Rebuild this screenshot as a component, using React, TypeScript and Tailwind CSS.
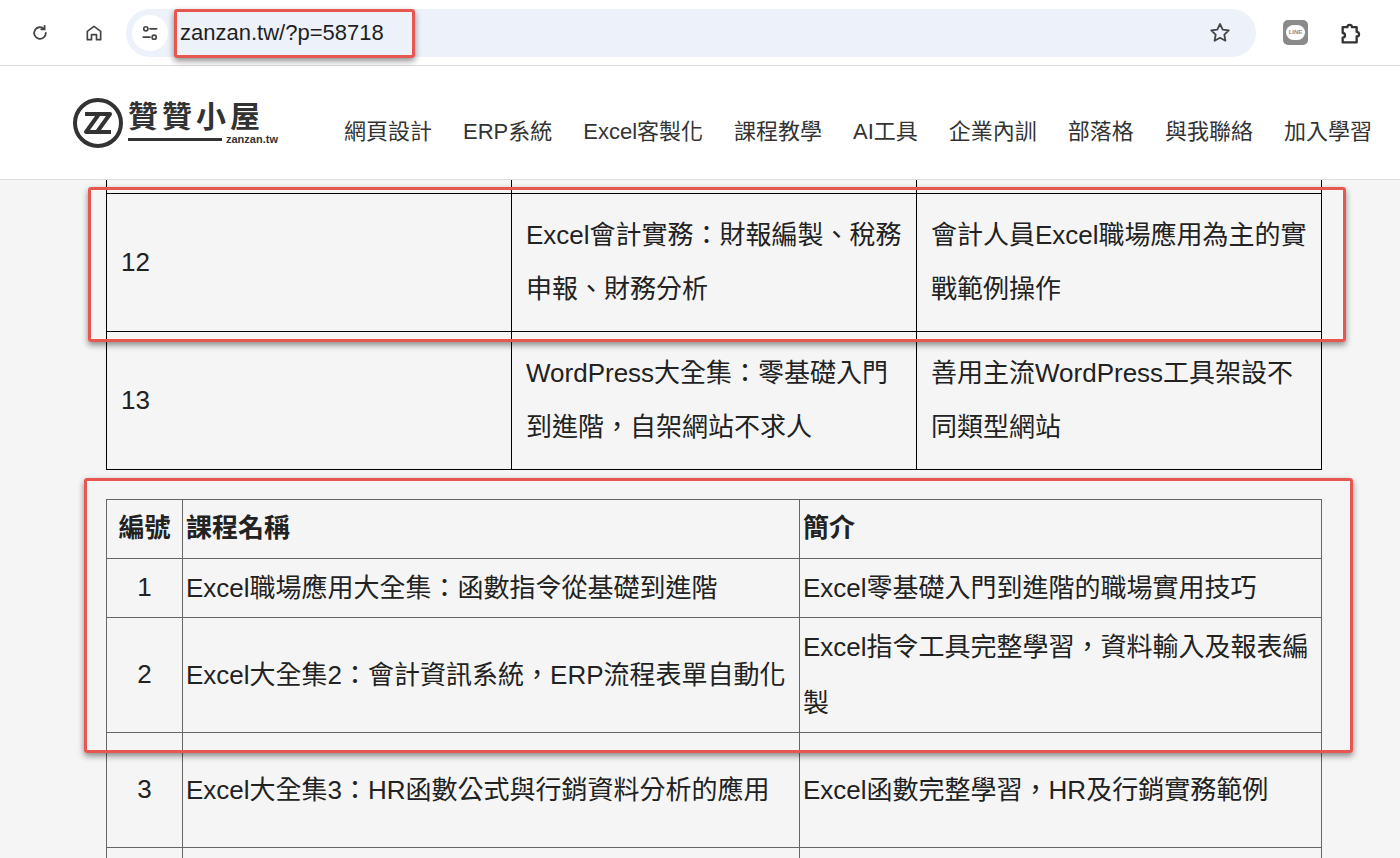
import React from "react";

const font = { fontFamily: '"Liberation Sans", "Noto Sans CJK TC", sans-serif' };

const nav = ["網頁設計", "ERP系統", "Excel客製化", "課程教學", "AI工具", "企業內訓", "部落格", "與我聯絡", "加入學習"];

const Mark = ({ className }: { className: string }) => (
  <div
    className={`pointer-events-none absolute rounded-[3px] border-[3px] border-[#e5574f] shadow-[0_3px_6px_rgba(0,0,0,0.45)] ${className}`}
  />
);

export default function App() {
  return (
    <div className="relative h-[858px] w-[1400px] overflow-hidden bg-[#f5f5f5] text-[#222]" style={font}>
      {/* browser bar */}
      <div className="flex h-[66px] items-center border-b border-[#dadce0] bg-white">
        <svg className="ml-[30px] h-5 w-5" viewBox="0 0 24 24" fill="none" stroke="#444" strokeWidth="2.2" strokeLinecap="round">
          <path d="M19 12a7 7 0 1 1-2.1-5" />
          <path d="M17.5 3.5v4h-4" />
        </svg>
        <svg className="ml-[34px] h-5 w-5" viewBox="0 0 24 24" fill="none" stroke="#444" strokeWidth="2" strokeLinejoin="round">
          <path d="M4 10l8-6 8 6v10h-5v-6h-6v6H4z" />
        </svg>
        <div className="ml-[22px] flex h-[48px] w-[1130px] items-center rounded-full bg-[#edf1fa]">
          <div className="ml-[6px] flex h-9 w-9 items-center justify-center rounded-full bg-white">
            <svg className="h-5 w-5" viewBox="0 0 24 24" fill="none" stroke="#444" strokeWidth="2" strokeLinecap="round">
              <circle cx="7" cy="7" r="2.5" />
              <path d="M12 7h8" />
              <circle cx="17" cy="17" r="2.5" />
              <path d="M4 17h8" />
            </svg>
          </div>
          <span className="ml-[12px] text-[22px] text-[#1f1f1f]">zanzan.tw/?p=58718</span>
          <svg className="ml-auto mr-[24px] h-6 w-6" viewBox="0 0 24 24" fill="none" stroke="#444" strokeWidth="1.8" strokeLinejoin="round">
            <path d="M12 3l2.7 5.6 6.1.8-4.5 4.2 1.1 6.1L12 16.8l-5.4 2.9 1.1-6.1-4.5-4.2 6.1-.8z" />
          </svg>
        </div>
        <div className="ml-[27px] flex h-[25px] w-[25px] items-center justify-center rounded-[5px] bg-[#8a8a8a]">
          <div className="flex h-[15px] w-[19px] items-center justify-center rounded-full bg-white text-[6px] font-bold text-[#8a8a8a]">LINE</div>
        </div>
        <svg className="ml-[30px] h-7 w-7" viewBox="0 0 24 24" fill="none" stroke="#333" strokeWidth="2" strokeLinejoin="round">
          <path d="M4 7h4a2 2 0 1 1 4 0h4v4a2 2 0 1 1 0 4v5H4v-4a2 2 0 1 0 0-4z" />
        </svg>
      </div>

      {/* site header */}
      <div className="flex h-[114px] items-center border-b border-[#ddd] bg-white">
        <div className="ml-[72px] flex items-center">
          <svg className="h-[52px] w-[52px]" viewBox="0 0 52 52" fill="none" stroke="#333" strokeWidth="4">
            <circle cx="26" cy="26" r="23" />
            <path d="M13 17h14L14 35h14" strokeWidth="4" strokeLinejoin="round" />
            <path d="M24 17h14L25 35h14" strokeWidth="4" strokeLinejoin="round" />
          </svg>
          <div className="ml-[4px] flex flex-col">
            <span className="text-[30px] font-bold leading-[34px] tracking-[4px] text-[#333]">贊贊小屋</span>
            <div className="flex items-center gap-1">
              <div className="h-[3px] w-[94px] bg-[#333]" />
              <span className="text-[11px] font-bold leading-none text-[#333]">zanzan.tw</span>
            </div>
          </div>
        </div>
        <nav className="ml-[66px] mt-[18px] flex gap-[31px] whitespace-nowrap text-[22px] text-[#333]">
          {nav.map((n) => (
            <span key={n}>{n}</span>
          ))}
        </nav>
      </div>

      {/* table 1 */}
      <div className="ml-[106px] w-[1216px] text-[26px]">
        <table className="w-full border-collapse">
          <tbody>
            <tr className="h-[13px]">
              <td className="w-[405px] border-x border-b border-black" />
              <td className="w-[405px] border-x border-b border-black" />
              <td className="border-x border-b border-black" />
            </tr>
            {[
              ["12", "Excel會計實務：財報編製、稅務申報、財務分析", "會計人員Excel職場應用為主的實戰範例操作"],
              ["13", "WordPress大全集：零基礎入門到進階，自架網站不求人", "善用主流WordPress工具架設不同類型網站"],
            ].map((r) => (
              <tr key={r[0]} className="h-[138px]">
                {r.map((c, i) => (
                  <td key={i} className="border border-black px-[14px] align-middle leading-[54px]">
                    {c}
                  </td>
                ))}
              </tr>
            ))}
          </tbody>
        </table>

        {/* table 2 */}
        <table className="mt-[29px] w-full border-collapse">
          <tbody>
            <tr className="h-[59px] font-bold">
              <td className="w-[76px] border border-[#666] text-center">編號</td>
              <td className="w-[617px] border border-[#666] px-[3px]">課程名稱</td>
              <td className="border border-[#666] px-[3px]">簡介</td>
            </tr>
            {[
              ["1", "Excel職場應用大全集：函數指令從基礎到進階", "Excel零基礎入門到進階的職場實用技巧", 59],
              ["2", "Excel大全集2：會計資訊系統，ERP流程表單自動化", "Excel指令工具完整學習，資料輸入及報表編製", 115],
              ["3", "Excel大全集3：HR函數公式與行銷資料分析的應用", "Excel函數完整學習，HR及行銷實務範例", 115],
              ["4", "", "", 60],
            ].map((r) => (
              <tr key={r[0] as string} style={{ height: r[3] as number }}>
                <td className="border border-[#666] text-center">{r[0] === "4" ? "" : r[0]}</td>
                <td className="border border-[#666] px-[3px] leading-[56px]">{r[1]}</td>
                <td className="border border-[#666] px-[3px] leading-[56px]">{r[2]}</td>
              </tr>
            ))}
          </tbody>
        </table>
      </div>

      <Mark className="left-[174px] top-[9px] h-[49px] w-[241px]" />
      <Mark className="left-[88px] top-[187px] h-[155px] w-[1258px]" />
      <Mark className="left-[84px] top-[478px] h-[275px] w-[1269px]" />
    </div>
  );
}
